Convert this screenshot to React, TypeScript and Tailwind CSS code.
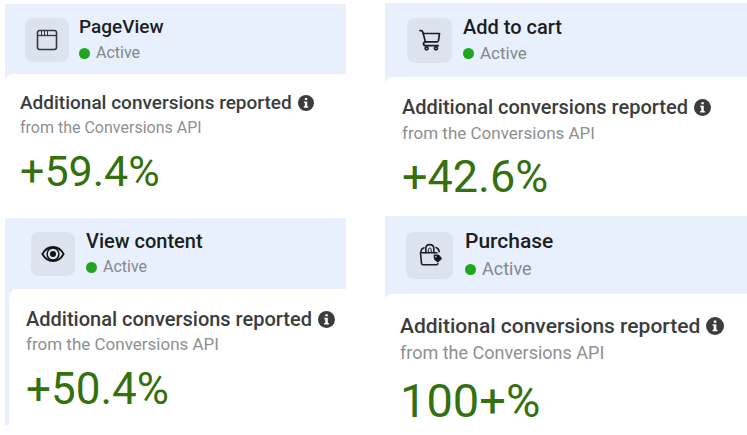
import type { ReactNode } from 'react'
import clsx from 'clsx'

const WindowIcon = () => (
  <svg viewBox="0 0 24 24" className="size-6" fill="none" stroke="#33373e" strokeWidth="1.6" aria-hidden="true">
    <rect x="2.5" y="2.5" width="19" height="19" rx="2.2" />
    <path d="M2.5 7.5h19" strokeWidth="1.3" />
    <path d="M6.5 3v4M9.5 3v4M12.5 3v4" strokeWidth="1" />
  </svg>
)

const CartIcon = () => (
  <svg viewBox="0 0 24 24" className="size-6" fill="none" stroke="#1c1e21" strokeWidth="1.7" strokeLinecap="round" strokeLinejoin="round" aria-hidden="true">
    <path d="M2 2.6h1.3c.7 0 1.2.4 1.4 1.1L7.4 13.8" />
    <path d="M5.2 5.5h16.3l-1 7c-.1.8-.6 1.3-1.4 1.3H7.4c-2.5.3-2.7 3.9.2 3.9h12.6" />
    <circle cx="8.6" cy="20.3" r="1.5" />
    <circle cx="17.9" cy="20.3" r="1.5" />
  </svg>
)

const EyeIcon = () => (
  <svg viewBox="0 0 24 24" className="size-6" fill="none" stroke="#111316" aria-hidden="true">
    <path d="M1.4 12C4 7.3 7.7 5 12 5s8 2.3 10.6 7C20 16.7 16.3 19 12 19s-8-2.3-10.6-7Z" strokeWidth="1.9" strokeLinejoin="round" />
    <circle cx="12" cy="12" r="5.9" strokeWidth="1.5" />
    <circle cx="12" cy="12" r="3" fill="#111316" stroke="none" />
  </svg>
)

const BagIcon = () => (
  <svg viewBox="0 0 24 24" className="size-6" fill="none" stroke="#1c1e21" strokeWidth="1.6" strokeLinecap="round" strokeLinejoin="round" aria-hidden="true">
    <path d="M19 9.8H2.5l1 10.6c.1.9.6 1.4 1.5 1.4h13.4c.7 0 1.2-.4 1.4-1" />
    <path d="M7.8 9.8V5.4C7.8 3 9.4 1.6 11.8 1.6s4 1.4 4 3.8v4.4" />
    <path d="M10.4 9.4V6.4c0-1.8 2.8-1.8 2.8 0v3" strokeWidth="1" />
    <path d="M3 8.6c.2-2 1.3-3.3 3-3.8M18 4.6c1.8.6 2.9 2 3.2 4" />
    <path d="M16.4 12.2l4.2.2 2.6 3-3.4 3.3-3-2.6-.4-3.9Z" fill="#111316" />
    <circle cx="17.9" cy="13.7" r=".8" fill="#dde3ee" stroke="none" />
  </svg>
)

const InfoIcon = () => (
  <svg viewBox="0 0 16 16" className="size-full" aria-hidden="true">
    <circle cx="8" cy="8" r="8" fill="#3b3c3e" />
    <path d="M6.9 3h2.3v2H6.9zM5.9 6.4h3.3v4.9h1v1.4H5.8v-1.4h1V7.8h-.9z" fill="#fff" />
  </svg>
)

// the tiles come in a few slightly different scales
const sizes = {
  sm: {
    header: 'pt-[10px] pb-2 pl-5 gap-[10px]',
    icon: 'size-11',
    title: 'text-[19px] leading-[26px]',
    status: 'text-[16px] leading-[26px]',
    body: 'pt-4 pl-[15px]',
    sub: 'text-[16px] leading-[24px]',
    value: 'text-[43px] leading-[56px] mt-[3px]',
    info: 'size-4',
  },
  md: {
    header: 'pt-[10px] pb-[9px] pl-[26px] gap-[11px]',
    icon: 'size-11',
    title: 'text-[20px] leading-[26px]',
    status: 'text-[16px] leading-[26px]',
    body: 'pt-[17px] pl-[17px]',
    sub: 'text-[17px] leading-[24px]',
    value: 'text-[44px] leading-[56px] mt-[5px]',
    info: 'size-[17px]',
  },
  lg: {
    header: 'py-[11px] pl-[22px] gap-[11px]',
    icon: 'size-[45px]',
    title: 'text-[20px] leading-[26px]',
    status: 'text-[17px] leading-[26px]',
    body: 'pt-[17px] pl-[17px]',
    sub: 'text-[17px] leading-[26px]',
    value: 'text-[45px] leading-[56px] mt-[3px]',
    info: 'size-[17px]',
  },
  xl: {
    header: 'py-[11px] pl-[21px] gap-3',
    icon: 'size-[47px]',
    title: 'text-[21px] leading-[28px]',
    status: 'text-[18px] leading-[28px]',
    body: 'pt-[18px] pl-[15px]',
    sub: 'text-[18px] leading-[26px]',
    value: 'text-[47px] leading-[60px] mt-[5px]',
    info: 'size-[18px]',
  },
}

type EventCardProps = {
  name: string
  value: string
  icon: ReactNode
  size: keyof typeof sizes
  inset?: boolean
}

function EventCard({ name, value, icon, size, inset }: EventCardProps) {
  const s = sizes[size]
  return (
    <section className={clsx('bg-[#e8f0fd]', inset && 'pl-1')}>
      <div className={clsx('flex items-center', s.header, inset && '-ml-1')}>
        <div className={clsx('flex shrink-0 items-center justify-center rounded-lg bg-[#dde3ee]', s.icon)}>{icon}</div>
        <div>
          <h2 className={clsx('font-medium text-[#1c1e21]', s.title)}>{name}</h2>
          <p className={clsx('flex items-center gap-[6px] text-[#84878b]', s.status)}>
            <span className="size-[11px] rounded-full bg-[#1fa51f]" />
            Active
          </p>
        </div>
      </div>
      <div className={clsx('rounded-tl-lg bg-white', s.body, inset && 'pb-2')}>
        <div className="flex items-center gap-[6px]">
          <h3 className={clsx('whitespace-nowrap font-medium text-[#3b3c3e]', s.title)}>Additional conversions reported</h3>
          <button type="button" aria-label="More information" className={clsx('shrink-0', s.info)}>
            <InfoIcon />
          </button>
        </div>
        <p className={clsx('text-[#8d8f92]', s.sub)}>from the Conversions API</p>
        <p className={clsx('text-[#35700f]', s.value)}>{value}</p>
      </div>
    </section>
  )
}

export default function App() {
  return (
    <main className="grid min-h-screen grid-cols-[341fr_362fr] items-start gap-x-[39px] bg-white pl-[5px] font-['Roboto',sans-serif]">
      <div className="flex flex-col gap-[19px] pt-1">
        <EventCard name="PageView" value="+59.4%" size="sm" icon={<WindowIcon />} />
        <EventCard name="View content" value="+50.4%" size="md" icon={<EyeIcon />} inset />
      </div>
      <div className="flex flex-col gap-[11px] pt-[3px]">
        <EventCard name="Add to cart" value="+42.6%" size="lg" icon={<CartIcon />} />
        <EventCard name="Purchase" value="100+%" size="xl" icon={<BagIcon />} />
      </div>
    </main>
  )
}
